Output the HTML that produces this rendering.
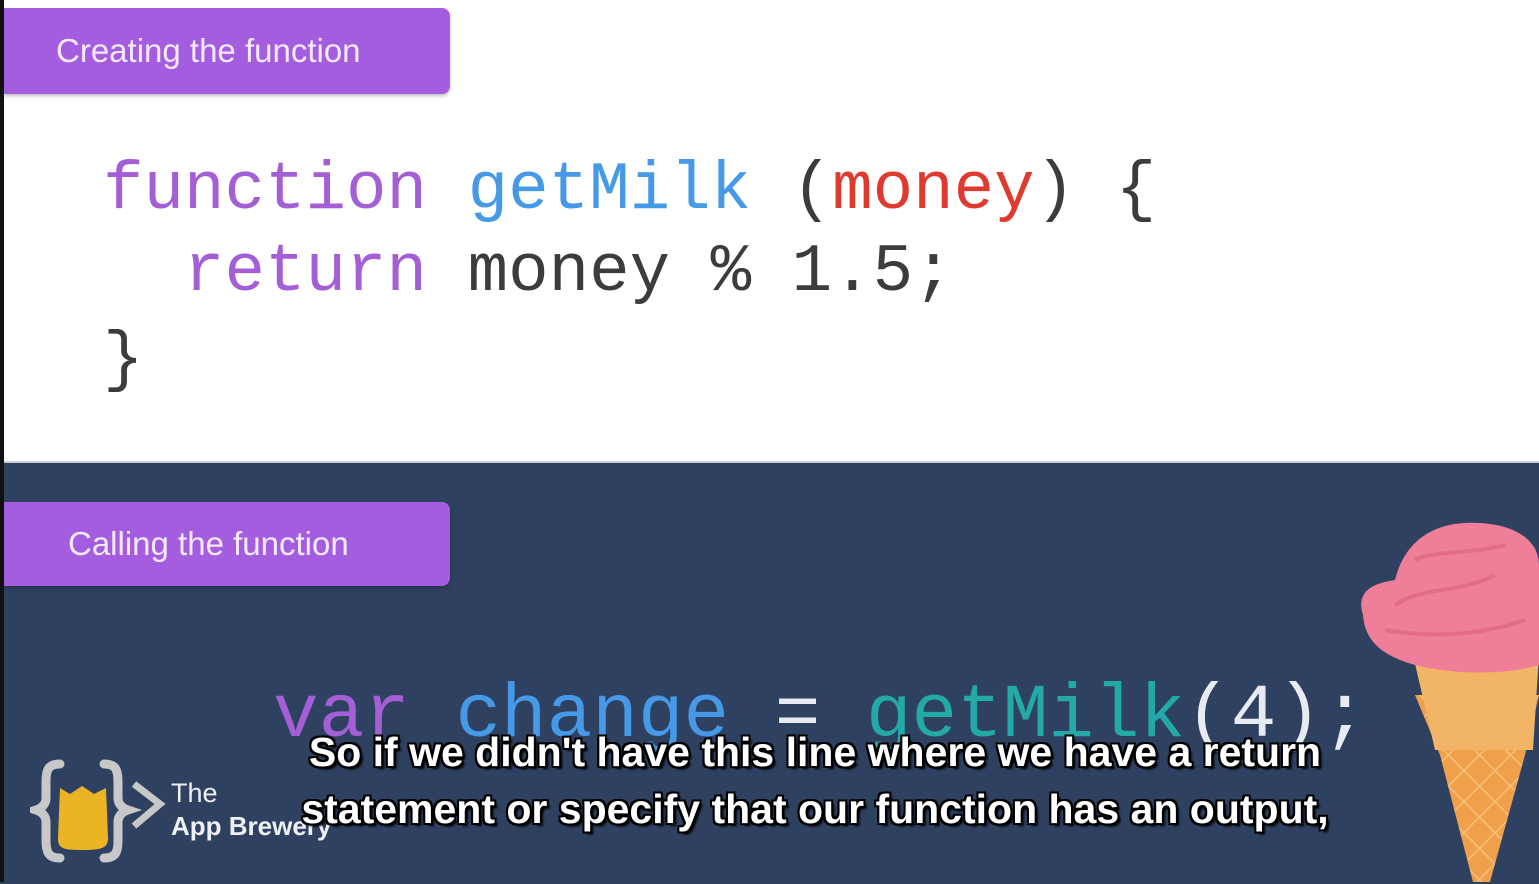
<!DOCTYPE html>
<html><head><meta charset="utf-8"><style>
html,body{margin:0;padding:0}
body{width:1539px;height:882px;position:relative;overflow:hidden;background:#fff;font-family:"Liberation Sans",sans-serif}
.strip{position:absolute;left:0;top:0;width:4px;height:882px;background:#111;z-index:5}
.top{position:absolute;left:0;top:0;width:1539px;height:461px;background:#fff}
.bot{position:absolute;left:0;top:461px;width:1539px;height:421px;background:#2f4160;border-top:2px solid #c9ced6}
.badge{position:absolute;left:4px;width:446px;background:#a45ddf;color:#f3eaff;font-size:33px;border-radius:0 8px 8px 0;box-shadow:0 2px 3px rgba(0,0,0,.25)}
.code{position:absolute;font-family:"Liberation Mono",monospace;white-space:pre;line-height:1}
.p{color:#a45ed6}.b{color:#4599e6}.r{color:#df3a30}.d{color:#3c3c3c}.t{color:#24a9a9}.w{color:#e8ecf2}
.sub{position:absolute;left:0;width:1630px;text-align:center;color:#fff;font-weight:bold;font-size:41px;font-family:"Liberation Sans",sans-serif;letter-spacing:0px;text-shadow:-2px 0 #000,2px 0 #000,0 -2px #000,0 2px #000,2px 2px #000,-2px -2px #000,2px -2px #000,-2px 2px #000,3px 3px 2px #000;white-space:nowrap}
</style></head><body>
<div class="top"></div>
<div class="bot"></div>
<div class="strip"></div>
<div class="badge" style="top:8px;height:86px;line-height:86px;padding-left:52px;box-sizing:border-box">Creating the function</div>
<div class="code" style="left:103px;top:158px;font-size:67.5px"><span class="p">function</span> <span class="b">getMilk</span> <span class="d">(</span><span class="r">money</span><span class="d">) {</span></div>
<div class="code" style="left:103px;top:240px;font-size:67.5px">  <span class="p">return</span> <span class="d">money % 1.5;</span></div>
<div class="code" style="left:103px;top:328px;font-size:67.5px"><span class="d">}</span></div>
<div class="badge" style="top:502px;height:84px;line-height:84px;padding-left:64px;box-sizing:border-box">Calling the function</div>
<div class="code" style="left:273px;top:678px;font-size:76px"><span class="p">var</span> <span class="b">change</span> <span class="w">=</span> <span class="t">getMilk</span><span class="w">(4);</span></div>
<svg style="position:absolute;left:30px;top:758px" width="140" height="105" viewBox="0 0 140 105">
<path d="M30 6 C18 6 16 12 16 24 L16 40 C16 46 12 50 6 52 C12 54 16 58 16 64 L16 82 C16 94 18 100 30 100" fill="none" stroke="#c8c8c8" stroke-width="9" stroke-linecap="round"/>
<path d="M74 6 C86 6 88 12 88 24 L88 40 C88 46 92 50 98 52 C92 54 88 58 88 64 L88 82 C88 94 86 100 74 100" fill="none" stroke="#c8c8c8" stroke-width="9" stroke-linecap="round"/>
<path d="M30 30 L40 36 L52 28 L64 36 L76 30 L78 80 C78 90 72 92 52 92 C32 92 28 90 28 80 Z" fill="#ebb425"/>
<path d="M104 26 L130 46 L104 68" fill="none" stroke="#c8c8c8" stroke-width="7"/>
</svg>
<div style="position:absolute;left:171px;top:778px;color:#eef0f4;font-size:27px">The</div>
<div style="position:absolute;left:171px;top:811px;color:#eef0f4;font-size:26px;font-weight:bold">App Brewery</div>
<svg style="position:absolute;left:1355px;top:505px" width="184" height="377" viewBox="0 0 184 377">
<defs><pattern id="w" width="22" height="22" patternUnits="userSpaceOnUse" patternTransform="rotate(45)"><rect width="22" height="22" fill="#f0a04a"/><path d="M0 0H22M0 0V22" stroke="#f7c07a" stroke-width="3"/></pattern></defs>
<path d="M60 190 L184 190 L170 250 L135 377 L118 377 L85 250 Z" fill="url(#w)"/>
<path d="M58 150 L184 150 L178 245 L80 245 Z" fill="#f2b466"/>
<path d="M8 110 C0 85 20 78 40 75 C50 35 80 15 125 18 C160 20 184 35 184 60 L184 160 C150 170 100 170 60 160 C25 150 10 135 8 110 Z" fill="#ef7e99"/>
<path d="M40 100 C70 80 100 90 140 70 M60 55 C80 45 110 50 150 40 M30 125 C60 130 110 135 170 115" stroke="#d85a7a" stroke-width="4" fill="none" opacity=".5"/>
</svg>
<div class="sub" style="top:729px">So if we didn't have this line where we have a return</div>
<div class="sub" style="top:786px">statement or specify that our function has an output,</div>
</body></html>
